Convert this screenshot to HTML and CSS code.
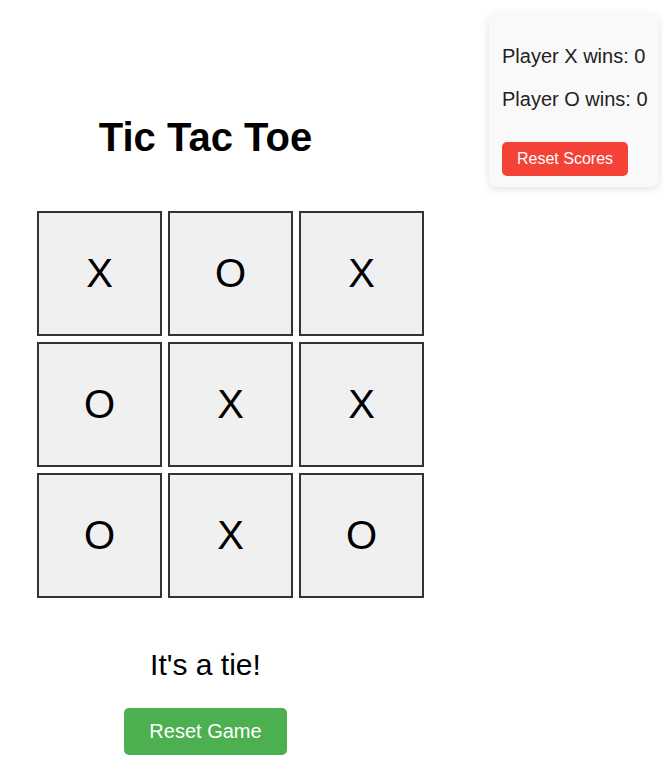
FILE: index.html
```html
<!DOCTYPE html>
<html lang="en">
<head>
<meta charset="utf-8">
<title>Tic Tac Toe</title>
<link rel="stylesheet" href="styles.css">
</head>
<body>
  <main class="game">
    <h1 class="title">Tic Tac Toe</h1>
    <div class="board">
      <div class="cell">X</div>
      <div class="cell">O</div>
      <div class="cell">X</div>
      <div class="cell">O</div>
      <div class="cell">X</div>
      <div class="cell">X</div>
      <div class="cell">O</div>
      <div class="cell">X</div>
      <div class="cell">O</div>
    </div>
    <p class="status">It's a tie!</p>
    <button class="reset-game">Reset Game</button>
  </main>
  <aside class="scores">
    <p class="score">Player X wins: 0</p>
    <p class="score">Player O wins: 0</p>
    <button class="reset-scores">Reset Scores</button>
  </aside>
</body>
</html>
```

FILE: styles.css
```css
html, body {
  margin: 0;
  padding: 0;
  background: #ffffff;
}

body {
  font-family: "Liberation Sans", Arial, Helvetica, sans-serif;
  color: #000;
}

.game {
  width: 411px;
  padding-top: 114px;
  display: flex;
  flex-direction: column;
  align-items: center;
}

.title {
  margin: 0;
  font-size: 40px;
  font-weight: bold;
  line-height: 46px;
  color: #000;
}

.board {
  align-self: flex-start;
  margin: 51px 0 0 37px;
  display: grid;
  grid-template-columns: repeat(3, 125px);
  grid-auto-rows: 125px;
  gap: 6px;
}

.cell {
  box-sizing: border-box;
  border: 2px solid #333;
  background: #f0f0f0;
  display: flex;
  align-items: center;
  justify-content: center;
  font-size: 40px;
  color: #000;
}

.status {
  margin: 49px 0 0;
  font-size: 30px;
  line-height: 35px;
  color: #000;
}

.reset-game {
  margin-top: 26px;
  padding: 12px 25px;
  border: none;
  border-radius: 5px;
  background: #4caf50;
  color: #fff;
  font-family: inherit;
  font-size: 20px;
  line-height: 23px;
}

.scores {
  position: absolute;
  top: 14px;
  right: 4px;
  width: 144px;
  padding: 11px 13px;
  background: #f9f9f9;
  border-radius: 8px;
  box-shadow: 0 2px 8px rgba(0, 0, 0, 0.12);
}

.score {
  margin: 20px 0;
  font-size: 20px;
  line-height: 23px;
  color: #222;
  white-space: nowrap;
}

.score + .score {
  margin-top: 19px;
}

.reset-scores {
  display: block;
  margin-top: 31px;
  padding: 8px 15px;
  border: none;
  border-radius: 5px;
  background: #f44336;
  color: #fff;
  font-family: inherit;
  font-size: 16px;
  line-height: 18px;
}
```
